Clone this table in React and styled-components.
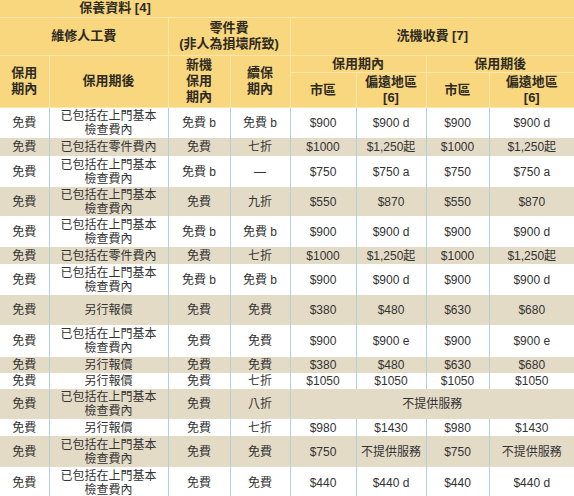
import styled, { createGlobalStyle } from 'styled-components';

const GlobalStyle = createGlobalStyle`
  html, body {
    margin: 0;
    padding: 0;
    background: #ffffff;
  }
`;

const Table = styled.table`
  width: 574px;
  table-layout: fixed;
  border-collapse: collapse;
  font-family: "Liberation Sans", "Noto Sans CJK TC", sans-serif;
  color: #333333;
`;

const Head = styled.th`
  background: #f8d77f;
  border: 1px solid #fbe6ae;
  border-top: none;
  font-size: 13px;
  font-weight: bold;
  line-height: 16px;
  color: #2f2a20;
  text-align: center;
  vertical-align: middle;
  padding: 0 2px;

  &:first-child {
    border-left: none;
  }
  &:last-child {
    border-right: none;
  }
`;

const HeadRow = styled.tr`
  height: ${({ $h }) => $h}px;
`;

const Caption = styled(Head)`
  border-right: none;
`;

const Blank = styled(Head)`
  border-left: none;
`;

const Row = styled.tr`
  height: ${({ $h }) => $h}px;
  background: ${({ $shade }) => ($shade ? '#e4dbc7' : '#ffffff')};
`;

const Cell = styled.td`
  border-left: 1px solid #b3d0d7;
  font-size: 12px;
  line-height: 14px;
  text-align: center;
  vertical-align: middle;
  padding: 0 2px;
  white-space: nowrap;

  &:first-child {
    border-left: none;
  }
`;

const widths = [49, 119, 62, 60, 66, 70, 63, 85];

const BASIC = (
  <>
    已包括在上門基本
    <br />
    檢查費內
  </>
);
const PARTS = '已包括在零件費內';
const QUOTE = '另行報價';
const NA = '不提供服務';

const rows = [
  { h: 31, cells: ['免費', BASIC, '免費 b', '免費 b', '$900', '$900 d', '$900', '$900 d'] },
  { h: 18, cells: ['免費', PARTS, '免費', '七折', '$1000', '$1,250起', '$1000', '$1,250起'] },
  { h: 31, cells: ['免費', BASIC, '免費 b', '—', '$750', '$750 a', '$750', '$750 a'] },
  { h: 29, cells: ['免費', BASIC, '免費', '九折', '$550', '$870', '$550', '$870'] },
  { h: 31, cells: ['免費', BASIC, '免費 b', '免費 b', '$900', '$900 d', '$900', '$900 d'] },
  { h: 17, cells: ['免費', PARTS, '免費', '七折', '$1000', '$1,250起', '$1000', '$1,250起'] },
  { h: 31, cells: ['免費', BASIC, '免費 b', '免費 b', '$900', '$900 d', '$900', '$900 d'] },
  { h: 30, cells: ['免費', QUOTE, '免費', '免費', '$380', '$480', '$630', '$680'] },
  { h: 32, cells: ['免費', BASIC, '免費', '免費', '$900', '$900 e', '$900', '$900 e'] },
  { h: 16, cells: ['免費', QUOTE, '免費', '免費', '$380', '$480', '$630', '$680'] },
  { h: 16, cells: ['免費', QUOTE, '免費', '七折', '$1050', '$1050', '$1050', '$1050'] },
  { h: 30, cells: ['免費', BASIC, '免費', '八折', NA], span: 4 },
  { h: 17, cells: ['免費', QUOTE, '免費', '七折', '$980', '$1430', '$980', '$1430'] },
  { h: 31, cells: ['免費', BASIC, '免費', '免費', '$750', NA, '$750', NA] },
  { h: 31, cells: ['免費', BASIC, '免費', '免費', '$440', '$440 d', '$440', '$440 d'] },
];

export default function App() {
  return (
    <>
      <GlobalStyle />
      <Table>
        <colgroup>
          {widths.map((w, i) => (
            <col key={i} style={{ width: w }} />
          ))}
        </colgroup>
        <thead>
          <HeadRow $h={17}>
            <Caption colSpan={3}>保養資料 [4]</Caption>
            <Blank colSpan={5} />
          </HeadRow>
          <HeadRow $h={38}>
            <Head colSpan={2}>維修人工費</Head>
            <Head colSpan={2}>
              零件費
              <br />
              (非人為損壞所致)
            </Head>
            <Head colSpan={4}>洗機收費 [7]</Head>
          </HeadRow>
          <HeadRow $h={15}>
            <Head rowSpan={2}>
              保用
              <br />
              期內
            </Head>
            <Head rowSpan={2}>保用期後</Head>
            <Head rowSpan={2}>
              新機
              <br />
              保用
              <br />
              期內
            </Head>
            <Head rowSpan={2}>
              續保
              <br />
              期內
            </Head>
            <Head colSpan={2}>保用期內</Head>
            <Head colSpan={2}>保用期後</Head>
          </HeadRow>
          <HeadRow $h={35}>
            <Head>市區</Head>
            <Head>
              偏遠地區
              <br />
              [6]
            </Head>
            <Head>市區</Head>
            <Head>
              偏遠地區
              <br />
              [6]
            </Head>
          </HeadRow>
        </thead>
        <tbody>
          {rows.map((row, r) => (
            <Row key={r} $h={row.h} $shade={r % 2 === 1}>
              {row.cells.map((c, i) => (
                <Cell key={i} colSpan={row.span && i === row.cells.length - 1 ? row.span : undefined}>
                  {c}
                </Cell>
              ))}
            </Row>
          ))}
        </tbody>
      </Table>
    </>
  );
}
